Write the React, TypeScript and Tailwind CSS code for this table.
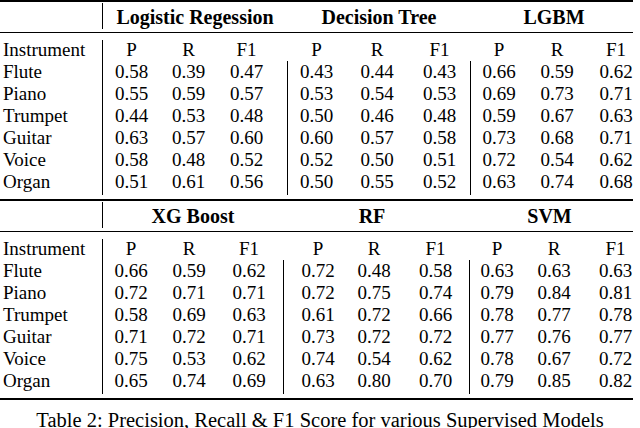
const FONT = "font-['Liberation_Serif','Times_New_Roman',serif]";

type Row = [string, string[]];

const TOP_ROWS: Row[] = [
  ["Flute", ["0.58", "0.39", "0.47", "0.43", "0.44", "0.43", "0.66", "0.59", "0.62"]],
  ["Piano", ["0.55", "0.59", "0.57", "0.53", "0.54", "0.53", "0.69", "0.73", "0.71"]],
  ["Trumpet", ["0.44", "0.53", "0.48", "0.50", "0.46", "0.48", "0.59", "0.67", "0.63"]],
  ["Guitar", ["0.63", "0.57", "0.60", "0.60", "0.57", "0.58", "0.73", "0.68", "0.71"]],
  ["Voice", ["0.58", "0.48", "0.52", "0.52", "0.50", "0.51", "0.72", "0.54", "0.62"]],
  ["Organ", ["0.51", "0.61", "0.56", "0.50", "0.55", "0.52", "0.63", "0.74", "0.68"]],
];

const BOTTOM_ROWS: Row[] = [
  ["Flute", ["0.66", "0.59", "0.62", "0.72", "0.48", "0.58", "0.63", "0.63", "0.63"]],
  ["Piano", ["0.72", "0.71", "0.71", "0.72", "0.75", "0.74", "0.79", "0.84", "0.81"]],
  ["Trumpet", ["0.58", "0.69", "0.63", "0.61", "0.72", "0.66", "0.78", "0.77", "0.78"]],
  ["Guitar", ["0.71", "0.72", "0.71", "0.73", "0.72", "0.72", "0.77", "0.76", "0.77"]],
  ["Voice", ["0.75", "0.53", "0.62", "0.74", "0.54", "0.62", "0.78", "0.67", "0.72"]],
  ["Organ", ["0.65", "0.74", "0.69", "0.63", "0.80", "0.70", "0.79", "0.85", "0.82"]],
];

// grid column of each value (columns 2, 6 and 10 hold the vertical rules)
const COL_START = [
  "col-start-3",
  "col-start-4",
  "col-start-5",
  "col-start-7",
  "col-start-8",
  "col-start-9",
  "col-start-11",
  "col-start-12",
  "col-start-13",
];

const SUB = ["P", "R", "F1", "P", "R", "F1", "P", "R", "F1"];

type SectionProps = {
  titles: string[];
  titleCls: string[];
  rows: Row[];
  grid: string;
  pad: string[];
};

const Section = ({ titles, titleCls, rows, grid, pad }: SectionProps) => {
  return (
    <div>
      {/* header */}
      <div className={`grid ${grid} h-[30px]`}>
        <div className="col-start-2 row-start-1 mt-px h-[26px] bg-black" />
        {titles.map((t, i) => (
          <div
            key={t}
            className={`${titleCls[i]} row-start-1 self-center text-center text-[20px] font-bold leading-[24px]`}
          >
            {t}
          </div>
        ))}
      </div>
      <div className="h-px w-[633px] bg-black" />

      {/* body */}
      <div className={`grid ${grid} grid-rows-[28px_repeat(6,22px)_6px]`}>
        <div className="col-start-2 row-[1/-1] mt-[7px] mb-[4px] bg-black" />
        <div className="col-start-6 row-[2/-1] mb-[4px] bg-black" />
        <div className="col-start-10 row-[2/-1] mb-[4px] bg-black" />

        <div className="col-start-1 row-start-1 self-end pl-[3px] leading-[22px]">Instrument</div>
        {SUB.map((s, i) => (
          <div
            key={i}
            className={`${COL_START[i]} ${pad[i]} row-start-1 self-end text-center leading-[22px]`}
          >
            {s}
          </div>
        ))}

        {rows.map(([name, vals]) => (
          <div key={name} className="contents">
            <div className="col-start-1 self-end pl-[3px] leading-[22px]">{name}</div>
            {vals.map((v, i) => (
              <div key={i} className={`${COL_START[i]} ${pad[i]} self-end text-center leading-[22px]`}>
                {v}
              </div>
            ))}
          </div>
        ))}
      </div>
    </div>
  );
};

export default function App() {
  return (
    <div className={`${FONT} w-[640px] h-[428px] overflow-hidden bg-white text-[19px] text-black`}>
      <div className="h-[2px] w-[633px] bg-black" />
      <Section
        titles={["Logistic Regession", "Decision Tree", "LGBM"]}
        titleCls={["col-[3/6]", "col-[7/10]", "col-[11/14] pr-[3px]"]}
        rows={TOP_ROWS}
        grid="grid-cols-[102px_1px_57px_57px_70px_1px_57px_64px_61px_1px_56px_60px_53px]"
        pad={["", "", "pr-[11px]", "", "", "", "", "", "pl-[5px]"]}
      />
      <div className="h-[2px] w-[633px] bg-black" />
      <Section
        titles={["XG Boost", "RF", "SVM"]}
        titleCls={["col-[3/6]", "col-[7/10] pr-[9px]", "col-[11/14] pr-[11px]"]}
        rows={BOTTOM_ROWS}
        grid="grid-cols-[102px_1px_56px_60px_64px_1px_68px_44px_73px_1px_54px_60px_56px]"
        pad={["", "", "pr-[4px]", "", "", "pl-[6px]", "", "", "pl-[7px]"]}
      />
      <div className="h-[2px] w-[633px] bg-black" />
      <div className="mt-[8px] w-[640px] text-center text-[20.5px] leading-[24px]">
        Table 2: Precision, Recall &amp; F1 Score for various Supervised Models
      </div>
    </div>
  );
}
